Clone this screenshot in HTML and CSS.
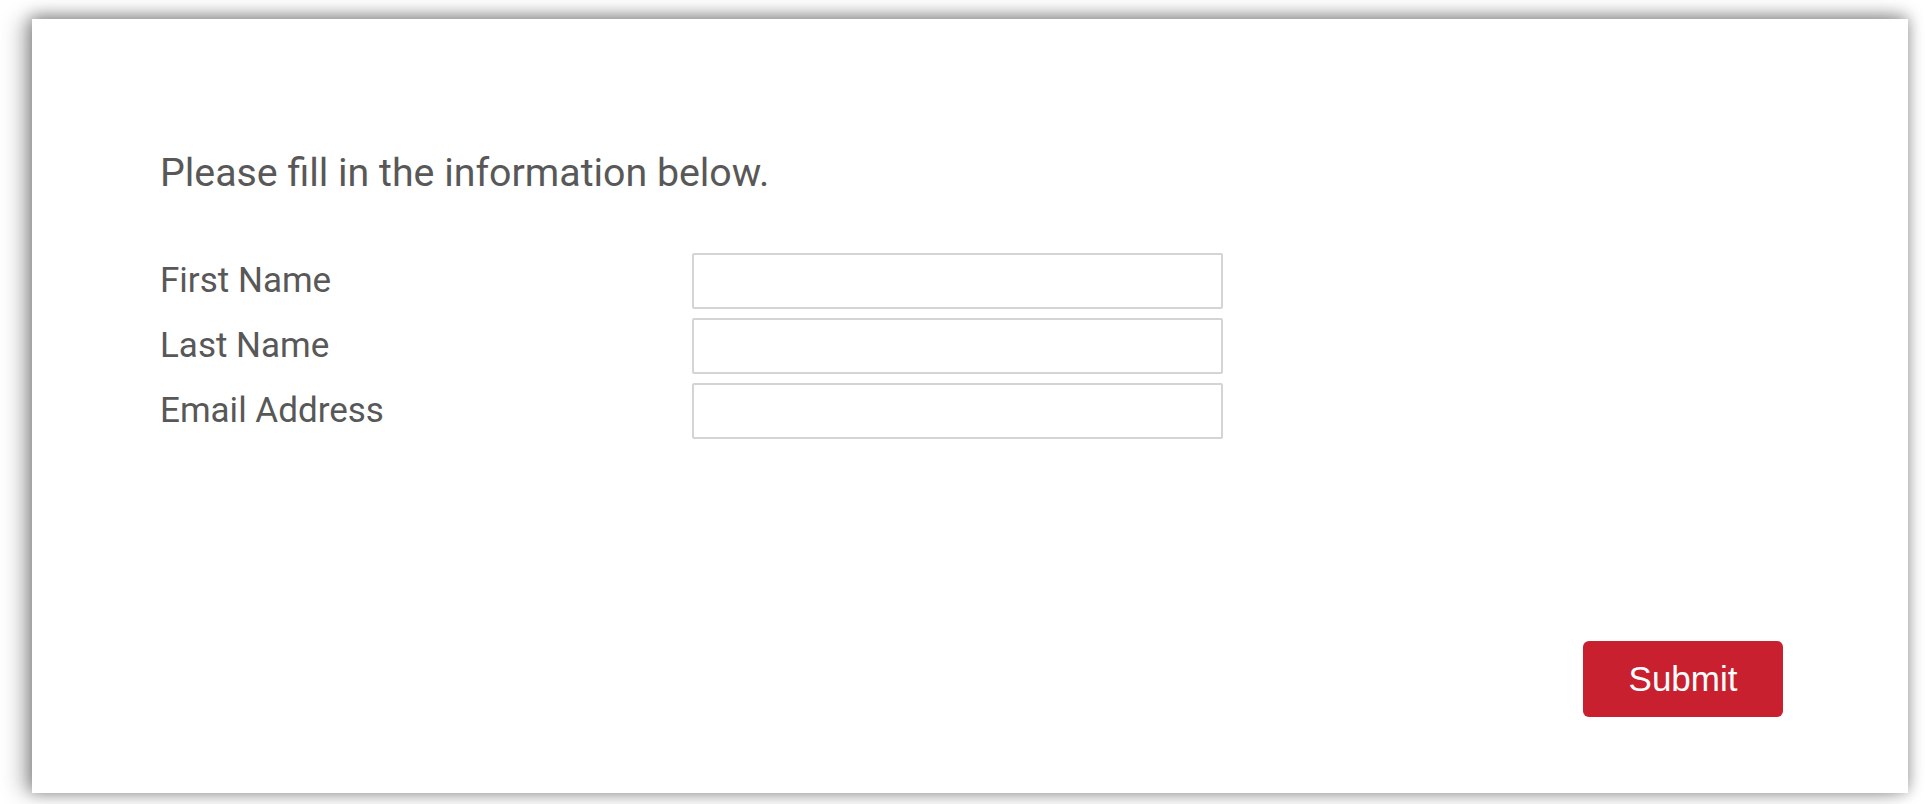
FILE: index.html
```html
<!DOCTYPE html>
<html lang="en">
<head>
    <meta charset="UTF-8">
    <meta name="viewport" content="width=device-width, initial-scale=1.0">
    <title>Information Form</title>
    <link rel="stylesheet" href="styles.css">
</head>
<body>
    <div class="page">
        <form class="card" onsubmit="return false;">
            <p class="intro">Please fill in the information below.</p>

            <div class="fields">
                <label for="firstName">First Name</label>
                <input type="text" id="firstName">

                <label for="lastName">Last Name</label>
                <input type="text" id="lastName">

                <label for="email">Email Address</label>
                <input type="email" id="email">
            </div>

            <button type="submit" class="submit">Submit</button>
        </form>
    </div>
</body>
</html>
```

FILE: styles.css
```css
html, body {
    margin: 0;
    padding: 0;
    background: #ffffff;
}
body {
    font-family: Roboto, "Liberation Sans", Arial, sans-serif;
    color: #555;
}
.page {
    box-sizing: border-box;
    width: 1926px;
    height: 804px;
    padding: 19px 18px 11px 32px;
}
.card {
    box-sizing: border-box;
    height: 100%;
    display: flex;
    flex-direction: column;
    background: #fff;
    padding: 130px 125px 76px 128px;
    box-shadow: -12px 0 20px rgba(0,0,0,0.22), 0 -6px 16px rgba(0,0,0,0.18), 0 0 14px rgba(0,0,0,0.28);
}
.intro {
    margin: 0 0 56px 0;
    font-size: 39.3px;
    line-height: 48px;
    color: #585858;
}
.fields {
    display: grid;
    grid-template-columns: 532px 531px;
    grid-auto-rows: 56px;
    row-gap: 9px;
    align-items: center;
}
.fields label {
    font-size: 35px;
    line-height: 56px;
    color: #585858;
}
.fields input {
    box-sizing: border-box;
    width: 100%;
    height: 56px;
    border: 2px solid #d4d4d4;
    border-radius: 2px;
    background: #fff;
    font-size: 24px;
    padding: 0 12px;
}
.fields input:focus {
    outline: none;
    border-color: #b5b5b5;
}
.submit {
    margin-top: auto;
    align-self: flex-end;
    width: 200px;
    height: 76px;
    border: none;
    border-radius: 6px;
    background-color: #c8202f;
    color: #fff;
    font-family: "Liberation Sans", Arial, sans-serif;
    font-size: 35px;
    cursor: pointer;
}
.submit:hover {
    background-color: #b01a28;
}
```
